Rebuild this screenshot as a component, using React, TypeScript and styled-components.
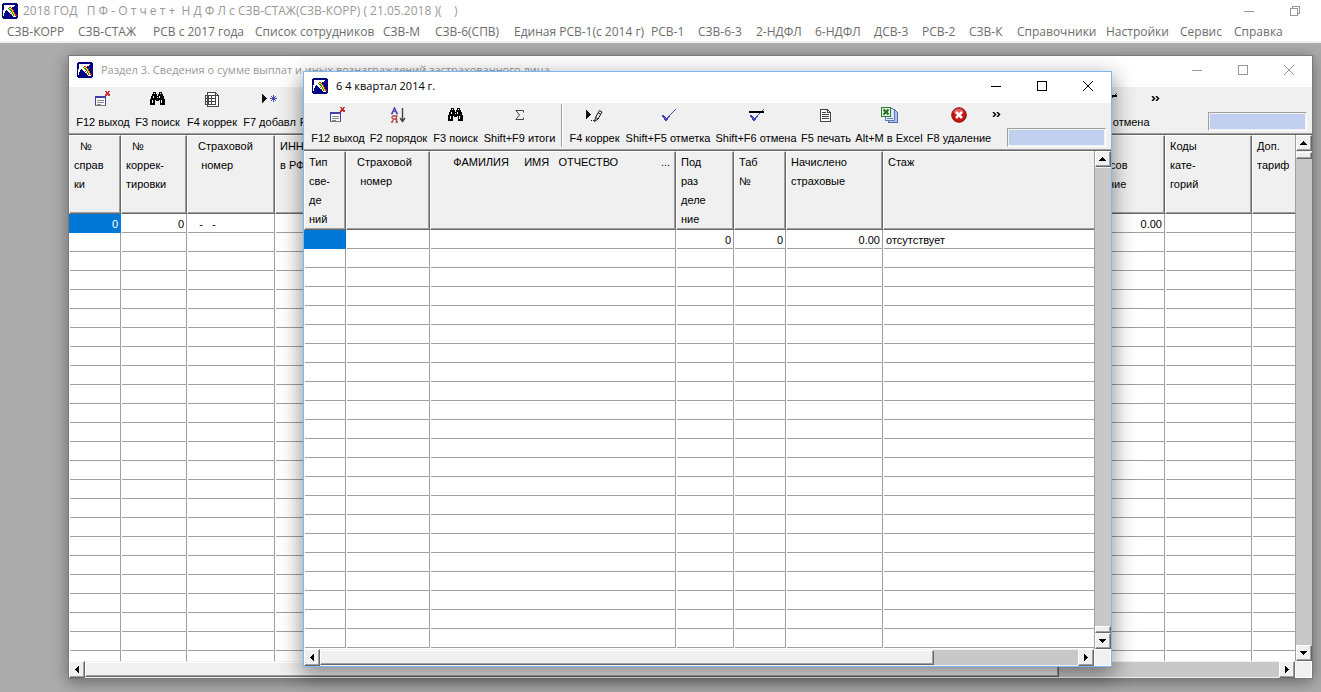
import React from "react";
import styled, { createGlobalStyle, css } from "styled-components";

const GlobalStyle = createGlobalStyle`
  *, *::before, *::after { box-sizing: border-box; }
  body { margin: 0; background: #ababab; }
  button { font: inherit; color: inherit; padding: 0; border: 0; background: none; }
`;

const ui = `"Open Sans", "Noto Sans", sans-serif`;
const bitmap = `"Liberation Sans", Arial, sans-serif`;
const face = "#f0f0f0";
const line = "#a0a0a0";
const dark = "#696969";

const Page = styled.div`
  min-height: 100vh;
  display: flex;
  flex-direction: column;
  font-family: ${ui};
  font-size: 12px;
  overflow: hidden;
`;

const MainTitle = styled.header`
  display: flex;
  align-items: center;
  height: 22px;
  padding: 0 3px 0 2px;
  gap: 5px;
  background: #fff;
  color: #999;
`;

const MainCaption = styled.h1`
  flex: 1;
  margin: 0;
  font-size: 12px;
  font-weight: 400;
  line-height: 22px;
  white-space: pre;
`;

const MenuBar = styled.nav`
  display: flex;
  gap: 14px;
  height: 21px;
  padding: 0 7px;
  background: #fff;
  border-bottom: 2px solid ${face};
  color: #6d6d6d;
`;

const MenuItem = styled.button<{ $w: number }>`
  flex: none;
  width: ${(p) => p.$w}px;
  text-align: left;
  line-height: 20px;
  white-space: nowrap;
`;

const Desktop = styled.main`
  position: relative;
  flex: 1;
  min-height: 480px;
  overflow: hidden;
  background: #ababab;
`;

const Win = styled.section<{ $active?: boolean }>`
  position: absolute;
  display: flex;
  flex-direction: column;
  border: 1px solid #7a7a7a;
  background: #fff;
  box-shadow: 0 3px 14px rgba(0, 0, 0, 0.4);
  inset: 12px 8px 13px 68px;
  ${(p) =>
    p.$active &&
    css`
      inset: 28px 209px 25px 303px;
      border-color: #7ab7f5;
      box-shadow: 0 7px 20px 2px rgba(0, 0, 0, 0.42);
    `}
`;

const TitleBar = styled.header<{ $active?: boolean }>`
  flex: none;
  display: flex;
  align-items: center;
  height: 31px;
  padding: 0 0 3px 8px;
  color: ${(p) => (p.$active ? "#000" : "#999")};
`;

const Caption = styled.h2`
  flex: 1;
  min-width: 0;
  margin: 0 0 0 8px;
  font-size: 11px;
  font-weight: 400;
  line-height: 22px;
  white-space: nowrap;
`;

const WinButton = styled.button`
  flex: none;
  width: 46px;
  height: 100%;
  display: flex;
  align-items: center;
  justify-content: center;
`;

const Controls = styled.div`
  display: flex;
  align-self: stretch;
`;

const ToolBar = styled.div`
  flex: none;
  display: flex;
  align-items: flex-start;
  gap: 6px;
  height: 47px;
  padding: 3px 5px 0 8px;
  background: ${face};
  border-bottom: 1px solid ${line};
  font-family: ${bitmap};
  font-size: 11px;
  color: #000;
`;

const Tool = styled.button<{ $w: number; $end?: boolean }>`
  flex: none;
  width: ${(p) => p.$w}px;
  margin-left: ${(p) => (p.$end ? "auto" : 0)};
  display: flex;
  flex-direction: column;
  align-items: center;
  gap: 7px;
  line-height: 14px;
  white-space: nowrap;
`;

const IconBox = styled.span`
  display: flex;
  align-items: center;
  justify-content: center;
  height: 18px;
`;

const Divider = styled.span`
  flex: none;
  width: 2px;
  height: 43px;
  margin-top: -2px;
  border-left: 1px solid ${line};
  border-right: 1px solid #fff;
`;

const More = styled.button<{ $gap: number }>`
  flex: none;
  width: 9px;
  margin: 0 ${(p) => p.$gap}px 0 -4px;
  height: 16px;
  display: flex;
  align-items: center;
`;

const Gauge = styled.div`
  flex: none;
  width: 99px;
  height: 19px;
  margin-top: 22px;
  padding: 1px;
  border: 1px solid;
  border-color: ${line} #fff #fff ${line};
  background: #c0d0ee content-box;
`;

const GridArea = styled.div`
  flex: 1;
  min-height: 0;
  display: flex;
  border-top: 1px solid ${dark};
`;

const GridClip = styled.div`
  flex: 1;
  min-width: 0;
  overflow: hidden;
`;

const Table = styled.table`
  width: 100%;
  table-layout: fixed;
  border-collapse: separate;
  border-spacing: 0;
  font-family: ${bitmap};
  font-size: 11px;
  color: #000;
`;

const HeadCell = styled.th`
  height: 79px;
  padding: 1px 0 0 4px;
  vertical-align: top;
  text-align: left;
  font-weight: 400;
  line-height: 19px;
  white-space: pre;
  overflow: hidden;
  background: ${face};
  border: 1px solid;
  border-color: #fff ${dark} ${dark} #fff;
  box-shadow: inset -1px -1px 0 ${line};
  &:last-child { border-right: 0; box-shadow: inset 0 -1px 0 ${line}; }
`;

const HeadText = styled.div`
  height: 76px;
`;

const Cell = styled.td<{ $right?: boolean; $selected?: boolean }>`
  height: 19px;
  padding: 0 2px 0 3px;
  line-height: 18px;
  white-space: pre;
  overflow: hidden;
  text-align: ${(p) => (p.$right ? "right" : "left")};
  border-right: 1px solid ${line};
  background: linear-gradient(${line}, ${line}) 1px 100% / 100% 1px no-repeat;
  &:last-child { border-right: 0; }
  ${(p) =>
    p.$selected &&
    css`
      color: #fff;
      background: #0078d7;
      border-color: #0078d7;
    `}
`;

const raised = css`
  background: ${face};
  border: 1px solid;
  border-color: #fff ${dark} ${dark} #fff;
  box-shadow: inset -1px -1px 0 ${line};
`;

const VBar = styled.div`
  flex: none;
  width: 17px;
  display: flex;
  flex-direction: column;
  justify-content: space-between;
  background: #c8c8c8;
  border-left: 1px solid ${line};
`;

const HBar = styled.div`
  flex: none;
  display: flex;
  height: 17px;
  background: #c8c8c8;
`;

const ArrowButton = styled.button`
  ${raised}
  flex: none;
  width: 16px;
  height: 16px;
  padding: 0 1px 1px 0;
  display: flex;
  align-items: center;
  justify-content: center;
  ${HBar} & { height: 17px; }
`;

const VTrack = styled.div<{ $end?: boolean }>`
  flex: 1;
  display: flex;
  flex-direction: column;
  justify-content: ${(p) => (p.$end ? "flex-end" : "flex-start")};
  border-top: 1px solid ${face};
`;

const VThumb = styled.div`
  ${raised}
  height: 7px;
`;

const HTrack = styled.div`
  flex: 1;
  border-top: 1px solid ${face};
  border-bottom: 1px solid ${face};
`;

const HThumb = styled.div<{ $share: number }>`
  ${raised}
  width: ${(p) => p.$share}%;
  height: 100%;
`;

const Corner = styled.div`
  flex: none;
  width: 17px;
  background: ${face};
  border: 1px solid #fff;
`;

/* ---------- icons ---------- */

const Svg = ({ w = 16, h = 16, children }: { w?: number; h?: number; children: React.ReactNode }) => (
  <svg width={w} height={h} viewBox={`0 0 ${w} ${h}`} shapeRendering="crispEdges" fill="none" aria-hidden="true">
    {children}
  </svg>
);

const AppIcon = () => (
  <Svg>
    <path fill="#000080" d="M0 1h1v-1h14v1h1v14h-1v1h-14v-1h-1z" />
    <path fill="#fff" d="M2 2h11v1h-1v1h-2v2h1v2h1v2h1v2h1v2h-3v-1h-1v-1h-1v-1h-1v-1h-1v-1h-1v-1h-1v-1h-1v1h-1v2h-1v3h-1z" />
    <path stroke="#e82020" d="M7 4.500h2M9 5.500h1M10 6.500h1M11 8.500h1M11 7.500h1M12 9.500h1M13 11.500h1M12 10.500h1M13 12.500h2M9 11.500h1M8 9.500h1" />
    <path stroke="#f4e020" d="M7 5.500h2M9 6.500h1M10 7.500h1M10 8.500h1M11 9.500h1M11 10.500h1M12 11.500h1M12 12.500h1" />
    <path stroke="#10a810" d="M6 5.500h1M7 6.500h2M8 7.500h2M9 8.500h1M10 9.500h1M10 10.500h1M11 11.500h1M11 12.500h1" />
  </Svg>
);

const ExitIcon = () => (
  <Svg>
    <path fill="#fff" stroke="#777" d="M.5 6.500h10v8h-10z" />
    <path fill="#4040a8" d="M0 5h11v2h-11z" />
    <path fill="#4040a8" d="M0 7h1v7h-1zM10 7h1v7h-1z" />
    <path stroke="#888" d="M2 9.500h7M2 11.500h7M2 13.500h4" />
    <path fill="#c83232" d="M10 0h2v1h1v-1h2v1h-1v2h1v2h-2v-1h-1v1h-2v-2h1v-2h-1z" />
  </Svg>
);

const FindIcon = () => (
  <Svg w={15} h={14}>
    <path fill="#000" d="M3 0h3v2h1v2h1v-2h1v-2h3v2h1v2h1v3h1v6h-5v-5h-1v1h-3v-1h-1v5h-5v-6h1v-3h1v-2h1z" />
    <path fill="#fff" d="M4 1h1v1h-1zM10 1h1v1h-1zM3 4h1v2h-1zM9 4h1v2h-1zM2 8h1v3h-1zM11 8h1v3h-1zM7 5h1v1h-1z" />
  </Svg>
);

const SheetIcon = () => (
  <Svg w={15} h={15}>
    <path fill="#fff" stroke="#444" d="M2.500 .5h8l3 3v11h-11z" />
    <path stroke="#444" d="M10.500 .5v3h3M.5 3.500h10v9h-10zM0 6.500h11M0 9.500h11M3.500 3v10M6.500 3v10" />
  </Svg>
);

const AddIcon = () => (
  <Svg w={15} h={10}>
    <path fill="#111" d="M0 0h1v1h1v1h1v1h1v1h1v1h-1v1h-1v1h-1v1h-1v1h-1z" />
    <path stroke="#4646b4" d="M11.500 1v7M8 4.500h7M9 2l5 5M14 2l-5 5" />
  </Svg>
);

const SortIcon = () => (
  <svg width="16" height="16" viewBox="0 0 16 16" fill="none" aria-hidden="true">
    <path stroke="#4848b0" strokeWidth="1.400" d="M1 6.500L3.500.8L6 6.500M2 4.500h3M0 6.500h2M5 6.500h2" />
    <path stroke="#b04040" strokeWidth="1.300" d="M5.500 9v6M6.500 9h-4q-1.500 0-1.500 1.500t1.500 1.500h3M3 12l-2 3M0 15h2M4.500 15h2.500" />
    <path stroke="#444" strokeWidth="1.400" d="M11.500 1v13M9 11l2.500 3.500L14 11" />
  </svg>
);

const SumIcon = () => (
  <Svg w={9} h={10}>
    <path stroke="#444" shapeRendering="auto" d="M8.500 2.500v-2H.8L4.500 5L.8 9.500h7.700v-2" />
  </Svg>
);

const EditIcon = () => (
  <Svg w={17} h={13}>
    <path fill="#111" d="M0 1h1v1h1v1h1v1h1v1h1v1h-1v1h-1v1h-1v1h-1v1h-1z" />
    <path stroke="#111" shapeRendering="auto" d="M8.500 12.500l1-4l4-7l2.500 1.500l-4 7zM10 8.500l2 1.500M12.500 4l2 1" />
    <path fill="#111" d="M5 11h1v1h-1zM7 11h1v1h-1z" />
  </Svg>
);

const CheckIcon = ({ struck }: { struck?: boolean }) => (
  <Svg w={15} h={13}>
    <path fill="#4646b4" d="M1 6h2v1h1v1h1v1h1v-1h1v-1h1v-1h1v-1h1v-1h1v-1h1v-1h1v-1h1v-1h1v1h-1v1h-1v1h-1v1h-1v1h-1v1h-1v2h-1v1h-1v2h-1v1h-2v-1h-1v-2h-1v-1h-1z" />
    {struck && <path fill="#000" d="M0 2h15v2h-15z" />}
  </Svg>
);

const PageIcon = () => (
  <Svg w={12} h={13}>
    <path fill="#fff" stroke="#444" d="M.5 .5h7l3 3v9h-10z" />
    <path stroke="#444" d="M7.500 .5v3h3M2 3.500h4M2 5.500h7M2 7.500h7M2 9.500h7" />
  </Svg>
);

const ExcelIcon = () => (
  <Svg w={17} h={16}>
    <path fill="#aec4e8" stroke="#4a6da8" d="M7.500 2.500h6l3 3v10h-9z" />
    <path fill="#dbe7fa" stroke="#5b7cb8" d="M4.500 1.500h7l2 2v10h-9z" />
    <path stroke="#6d8cc4" d="M6 11.500h6" />
    <path fill="#e6f3e2" stroke="#2f7d32" d="M.5 .5h9v9h-9z" />
    <path stroke="#1f6d24" strokeWidth="2" shapeRendering="auto" d="M2.500 2.500l5 5M7.500 2.500l-5 5" />
  </Svg>
);

const DeleteIcon = () => (
  <svg width="16" height="16" viewBox="0 0 16 16" aria-hidden="true">
    <circle cx="8" cy="8" r="7.300" fill="#c41414" stroke="#8f1010" />
    <ellipse cx="7.500" cy="4.500" rx="5" ry="3" fill="#e05c5c" />
    <path stroke="#fff" strokeWidth="2.600" d="M5 5l6 6M11 5l-6 6" />
  </svg>
);

const MoreIcon = () => (
  <Svg w={9} h={5}>
    <path stroke="#000" strokeWidth="1.500" shapeRendering="auto" d="M1 0l2.500 2.500L1 5M5 0l2.500 2.500L5 5" />
  </Svg>
);

const arrowPaths = {
  up: "M3 0h1v1h1v1h1v1h1v1h-7v-1h1v-1h1v-1h1z",
  down: "M0 0h7v1h-1v1h-1v1h-1v1h-1v-1h-1v-1h-1v-1h-1z",
  left: "M3 0h1v7h-1v-1h-1v-1h-1v-1h-1v-1h1v-1h1v-1h1z",
  right: "M0 0h1v1h1v1h1v1h1v1h-1v1h-1v1h-1v1h-1z",
};

const Arrow = ({ dir }: { dir: keyof typeof arrowPaths }) => {
  const flat = dir === "up" || dir === "down";
  return (
    <ArrowButton aria-label={dir}>
      <Svg w={flat ? 7 : 4} h={flat ? 4 : 7}>
        <path fill="#000" d={arrowPaths[dir]} />
      </Svg>
    </ArrowButton>
  );
};

const Minimize = () => (
  <WinButton aria-label="Свернуть">
    <Svg w={10} h={10}><path stroke="currentColor" d="M0 5.500h10" /></Svg>
  </WinButton>
);

const WindowControls = () => (
  <Controls>
    <Minimize />
    <WinButton aria-label="Развернуть">
      <Svg w={10} h={10}><path stroke="currentColor" d="M.5 .5h9v9h-9z" /></Svg>
    </WinButton>
    <WinButton aria-label="Закрыть">
      <Svg w={10} h={10}>
        <path stroke="currentColor" shapeRendering="auto" d="M0 0l10 10M10 0l-10 10" />
      </Svg>
    </WinButton>
  </Controls>
);

/* ---------- data ---------- */

const menu: [string, number][] = [
  ["СЗВ-КОРР", 57], ["СЗВ-СТАЖ", 61], ["РСВ с 2017 года", 88], ["Список сотрудников", 114],
  ["СЗВ-М", 38], ["СЗВ-6(СПВ)", 65], ["Единая РСВ-1(с 2014 г)", 123], ["РСВ-1", 33],
  ["СЗВ-6-3", 44], ["2-НДФЛ", 45], ["6-НДФЛ", 45], ["ДСВ-3", 34], ["РСВ-2", 33], ["СЗВ-К", 34],
  ["Справочники", 75], ["Настройки", 60], ["Сервис", 40], ["Справка", 46],
];

type Column = { head: string; width?: number; value?: string; right?: boolean };

const sectionColumns: Column[] = [
  { head: "  №\nсправ\nки", width: 52, value: "0", right: true },
  { head: "  №\nкоррек-\nтировки", width: 66, value: "0", right: true },
  { head: "  Страховой\n   номер", width: 88, value: "   -   -" },
  { head: "ИНН\nв РФ", width: 88 },
  { head: "" },
  { head: "\nвзносов\n   чение", width: 83, value: "0.00", right: true },
  { head: "Коды\nкате-\nгорий", width: 87 },
  { head: "Доп.\nтариф", width: 43 },
];

const quarterColumns: Column[] = [
  { head: "Тип\nсве-\nде\nний", width: 42, value: " " },
  { head: "  Страховой\n   номер", width: 84 },
  { head: "      ФАМИЛИЯ     ИМЯ   ОТЧЕСТВО              ...", width: 246 },
  { head: "Под\nраз\nделе\nние", width: 58, value: "0", right: true },
  { head: "Таб\n№", width: 52, value: "0", right: true },
  { head: "Начислено\nстраховые", width: 97, value: "0.00", right: true },
  { head: "Стаж", value: "отсутствует" },
];

const Grid = ({ columns, rows, share, thumbAtEnd }: {
  columns: Column[]; rows: number; share: number; thumbAtEnd?: boolean;
}) => (
  <>
    <GridArea>
      <GridClip>
        <Table>
          <colgroup>
            {columns.map((c, i) => <col key={i} width={c.width} />)}
          </colgroup>
          <thead>
            <tr>
              {columns.map((c, i) => (
                <HeadCell key={i} scope="col"><HeadText>{c.head}</HeadText></HeadCell>
              ))}
            </tr>
          </thead>
          <tbody>
            {Array.from({ length: rows }, (_, r) => (
              <tr key={r}>
                {columns.map((c, i) => (
                  <Cell key={i} $right={c.right} $selected={r === 0 && i === 0}>
                    {r === 0 ? c.value : null}
                  </Cell>
                ))}
              </tr>
            ))}
          </tbody>
        </Table>
      </GridClip>
      <VBar>
        <Arrow dir="up" />
        <VTrack $end={thumbAtEnd}><VThumb /></VTrack>
        <Arrow dir="down" />
      </VBar>
    </GridArea>
    <HBar>
      <Arrow dir="left" />
      <HTrack><HThumb $share={share} /></HTrack>
      <Arrow dir="right" />
      <Corner />
    </HBar>
  </>
);

const ToolItem = ({ label, w, icon, end }: {
  label: string; w: number; icon: React.ReactNode; end?: boolean;
}) => (
  <Tool $w={w} $end={end}>
    <IconBox>{icon}</IconBox>
    <span>{label}</span>
  </Tool>
);

export default function App() {
  return (
    <Page>
      <GlobalStyle />
      <MainTitle>
        <AppIcon />
        <MainCaption>{"2018 ГОД   П Ф - О т ч е т +  Н Д Ф Л с СЗВ-СТАЖ(СЗВ-КОРР) ( 21.05.2018 )(    )"}</MainCaption>
        <Controls>
          <Minimize />
          <WinButton aria-label="Восстановить">
            <Svg w={10} h={10}>
              <path stroke="currentColor" d="M.5 2.500h7v7h-7zM2.500 2.500v-2h7v7h-2" />
            </Svg>
          </WinButton>
        </Controls>
      </MainTitle>
      <MenuBar>
        {menu.map(([label, w]) => <MenuItem key={label} $w={w}>{label}</MenuItem>)}
      </MenuBar>
      <Desktop>
        <Win>
          <TitleBar>
            <AppIcon />
            <Caption>Раздел 3. Сведения о сумме выплат и иных вознаграждений застрахованного лица</Caption>
            <WindowControls />
          </TitleBar>
          <ToolBar>
            <ToolItem label="F12 выход" w={52} icon={<ExitIcon />} />
            <ToolItem label="F3 поиск" w={45} icon={<FindIcon />} />
            <ToolItem label="F4 коррек" w={52} icon={<SheetIcon />} />
            <ToolItem label="F7 добавл" w={51} icon={<AddIcon />} />
            <ToolItem label="F8 удаление" w={62} icon={<DeleteIcon />} />
            <ToolItem label="Shift+F6 отмена" w={80} icon={<CheckIcon struck />} end />
            <More $gap={42} aria-label="Ещё"><MoreIcon /></More>
            <Gauge />
          </ToolBar>
          <Grid columns={sectionColumns} rows={24} share={81.6} />
        </Win>
        <Win $active>
          <TitleBar $active>
            <AppIcon />
            <Caption>6 4 квартал 2014 г.</Caption>
            <WindowControls />
          </TitleBar>
          <ToolBar>
            <ToolItem label="F12 выход" w={52} icon={<ExitIcon />} />
            <ToolItem label="F2 порядок" w={57} icon={<SortIcon />} />
            <ToolItem label="F3 поиск" w={45} icon={<FindIcon />} />
            <ToolItem label="Shift+F9 итоги" w={71} icon={<SumIcon />} />
            <Divider />
            <ToolItem label="F4 коррек" w={51} icon={<EditIcon />} />
            <ToolItem label="Shift+F5 отметка" w={84} icon={<CheckIcon />} />
            <ToolItem label="Shift+F6 отмена" w={80} icon={<CheckIcon struck />} />
            <ToolItem label="F5 печать" w={48} icon={<PageIcon />} />
            <ToolItem label="Alt+M в Excel" w={66} icon={<ExcelIcon />} />
            <ToolItem label="F8 удаление" w={62} icon={<DeleteIcon />} />
            <More $gap={0} aria-label="Ещё"><MoreIcon /></More>
            <Gauge />
          </ToolBar>
          <Grid columns={quarterColumns} rows={22} share={81} thumbAtEnd />
        </Win>
      </Desktop>
    </Page>
  );
}
